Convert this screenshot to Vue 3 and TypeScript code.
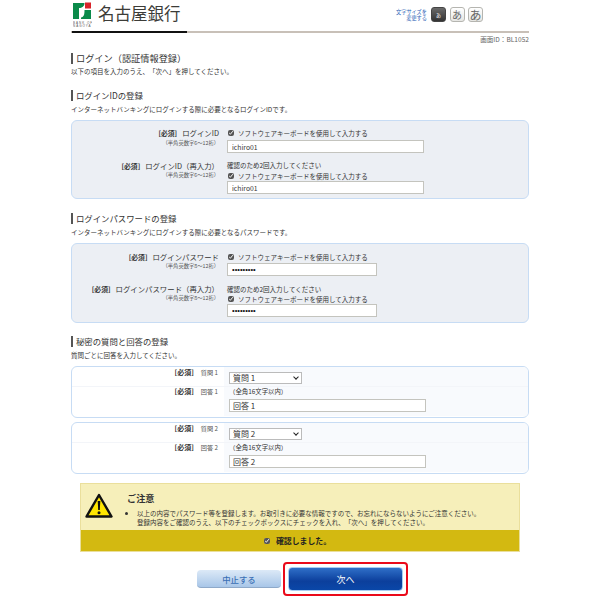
<script setup lang="ts">
interface Row { label: string; note: string; confirm: boolean; value: string }
const idNote = '\uFF08半角英数字6\uFF5E12桁\uFF09'
const pwNote = '\uFF08半角英数字8\uFF5E12桁\uFF09'
const idRows: Row[] = [
  { label: 'ログインID', note: idNote, confirm: false, value: 'ichiro01' },
  { label: 'ログインID\uFF08再入力\uFF09', note: idNote, confirm: true, value: 'ichiro01' },
]
const pwRows: Row[] = [
  { label: 'ログインパスワード', note: pwNote, confirm: false, value: 'password1' },
  { label: 'ログインパスワード\uFF08再入力\uFF09', note: pwNote, confirm: true, value: 'password1' },
]
const questions = [1, 2]
</script>

<template>
  <div class="page">
    <header class="top">
      <div class="logo-wrap">
        <svg class="logo" width="19" height="26" viewBox="0 0 19 26">
          <path d="M0 2 H11.5 C11.5 5.5 9 7 6 7 V18 H0 Z" fill="#0a8a4a" />
          <rect x="12" y="1.5" width="6" height="6" fill="#d8232a" />
          <path d="M18 9 V18 H8 V16.5 C11 16 11.5 13.5 11.5 9 Z" fill="#0a8a4a" />
          <text class="tiny" x="0" y="22.5">BANK OF</text>
          <text class="tiny" x="0" y="25.6">NAGOYA</text>
        </svg>
        <span class="bank">名古屋銀行</span>
      </div>
      <div class="sizer">
        <span class="sizer-label">文字サイズを<br />変更する</span>
        <span class="size-btn on">あ</span>
        <span class="size-btn mid">あ</span>
        <span class="size-btn big">あ</span>
      </div>
    </header>
    <div class="rule"><i></i></div>
    <div class="screen-id">画面ID&#xFF1A;BL1052</div>

    <h2 class="h first">ログイン&#xFF08;認証情報登録&#xFF09;</h2>
    <p class="sub tight">以下の項目を入力のうえ、「次へ」を押してください。</p>

    <h2 class="h second">ログインIDの登録</h2>
    <p class="sub">インターネットバンキングにログインする際に必要となるログインIDです。</p>
    <section class="box idbox">
      <div v-for="r in idRows" :key="r.label" class="row" :class="{ again: r.confirm }">
        <div class="lab">
          <div class="lab-main"><b>[必須]</b>{{ r.label }}</div>
          <div class="note">{{ r.note }}</div>
        </div>
        <div class="ctl">
          <div v-if="r.confirm" class="hint">確認のため2回入力してください</div>
          <label class="chk"><input type="checkbox" checked />ソフトウェアキーボードを使用して入力する</label>
          <input class="txt wide" type="text" :value="r.value" />
        </div>
      </div>
    </section>

    <h2 class="h third">ログインパスワードの登録</h2>
    <p class="sub">インターネットバンキングにログインする際に必要となるパスワードです。</p>
    <section class="box pw">
      <div v-for="r in pwRows" :key="r.label" class="row" :class="{ again: r.confirm }">
        <div class="lab">
          <div class="lab-main"><b>[必須]</b>{{ r.label }}</div>
          <div class="note">{{ r.note }}</div>
        </div>
        <div class="ctl">
          <div v-if="r.confirm" class="hint">確認のため2回入力してください</div>
          <label class="chk"><input type="checkbox" checked />ソフトウェアキーボードを使用して入力する</label>
          <input class="txt narrow" type="password" :value="r.value" />
        </div>
      </div>
    </section>

    <h2 class="h fourth">秘密の質問と回答の登録</h2>
    <p class="sub">質問ごとに回答を入力してください。</p>
    <section v-for="q in questions" :key="q" class="qbox">
      <div class="qrow top-row">
        <div class="qlab"><b>[必須]</b><span>質問 {{ q }}</span></div>
        <div class="qctl">
          <span class="sel-wrap"><select class="sel"><option>質問 {{ q }}</option></select></span>
        </div>
      </div>
      <div class="qrow bottom-row">
        <div class="qlab"><b>[必須]</b><span>回答 {{ q }}</span></div>
        <div class="qctl">
          <div class="qhint">&#xFF08;全角16文字以内&#xFF09;</div>
          <input class="txt answer" type="text" :value="`回答 ${q}`" />
        </div>
      </div>
    </section>

    <section class="notice">
      <div class="notice-body">
        <svg class="warn" width="28" height="25" viewBox="0 0 28 25">
          <path d="M14 2 L26.5 23.5 H1.5 Z" fill="#ffe600" stroke="#111" stroke-width="2.4" stroke-linejoin="round" />
          <path d="M12.7 8 H15.3 L14.8 17 H13.2 Z" fill="#111" />
          <circle cx="14" cy="19.8" r="1.5" fill="#111" />
        </svg>
        <div>
          <div class="notice-title">ご注意</div>
          <ul class="notice-list">
            <li>以上の内容でパスワード等を登録します。お取引きに必要な情報ですので、お忘れにならないようにご注意ください。<br />登録内容をご確認のうえ、以下のチェックボックスにチェックを入れ、「次へ」を押してください。</li>
          </ul>
        </div>
      </div>
      <label class="notice-band"><input type="checkbox" checked />確認しました。</label>
    </section>

    <div class="actions">
      <button class="btn cancel" type="button">中止する</button>
      <span class="highlight"><button class="btn next" type="button">次へ</button></span>
    </div>
  </div>
</template>

<style>
html, body { margin: 0; background: #fff; }
</style>

<style scoped>
.page {
  width: 458px;
  height: 610px;
  margin-left: 71px;
  overflow: hidden;
  font-family: "Noto Sans CJK JP", "Liberation Sans", sans-serif;
  text-spacing-trim: space-all;
  color: #333;
  box-sizing: border-box;
}
.top { height: 31px; display: flex; justify-content: space-between; align-items: flex-start; }
.logo-wrap { display: flex; align-items: flex-start; margin-left: 2px; padding-top: 1px; }
.logo { display: block; }
.tiny { font-family: "Liberation Sans", sans-serif; font-size: 3px; fill: #555; letter-spacing: 1px; }
.bank { font-size: 16.5px; line-height: 24px; margin-left: 6px; color: #3c3c38; font-weight: 400; }
.sizer { display: flex; align-items: center; margin: 7px 46px 0 0; }
.sizer-label { font-size: 5.2px; line-height: 6px; color: #2a62b5; text-align: right; margin-right: 4px; }
.size-btn {
  width: 15px; height: 15px; box-sizing: border-box; margin-right: 3.5px;
  border: 1px solid #b5b5b0; border-radius: 3px; background: linear-gradient(#fff, #e6e6e3);
  display: flex; align-items: center; justify-content: center; color: #666; line-height: 1;
}
.size-btn.on { background: linear-gradient(#6a6a6a, #333); border-color: #444; color: #fff; font-size: 5px; }
.size-btn.mid { font-size: 10px; }
.size-btn.big { font-size: 12px; margin-right: 0; }
.rule { height: 1.5px; background: #c8c0b8; }
.rule i { display: block; width: 115px; height: 100%; margin-left: 1px; background: #111; }
.screen-id { text-align: right; font-size: 6.6px; line-height: 9px; margin-top: 2px; color: #666; }

.h {
  margin: 0; padding-left: 3px; border-left: 2px solid #555;
  font-size: 8.4px; line-height: 11px; font-weight: 400; color: #333;
}
.h.first { margin-top: 9px; font-size: 9.2px; }
.h.second { margin-top: 14px; }
.h.third { margin-top: 13.5px; }
.h.fourth { margin-top: 13px; }
.sub { margin: 4px 0 0; font-size: 6.5px; line-height: 9px; color: #333; }
.sub.tight { margin-top: 3px; }

.box {
  margin-top: 6.5px; height: 79px; box-sizing: border-box; padding: 6.5px 0 0;
  background: #eceff4; border: 1.5px solid #c7dcf4; border-radius: 6px;
}
.box.pw { height: 80px; margin-top: 6px; padding-top: 8px; }
.row { display: flex; }
.row.again { margin-top: 6.5px; }
.box.pw .row.again { margin-top: 7.5px; }
.lab { width: 147px; text-align: right; flex: none; }
.lab-main { font-size: 7.4px; line-height: 11px; color: #333; white-space: nowrap; margin-top: -.5px; }
.lab-main b { font-size: 6.8px; margin-right: 5px; }
.note { font-size: 5.3px; line-height: 7px; color: #555; }
.idbox .note { margin-top: 1px; }
.idbox .row.again .lab-main { margin-top: 1.5px; line-height: 9px; }
.idbox .row.again .note { margin-top: 1.5px; line-height: 5px; }
.ctl { margin-left: 8px; flex: 1; }
.hint, .chk { font-size: 6.5px; line-height: 10px; display: block; white-space: nowrap; }
.chk { display: flex; align-items: center; height: 10px; }
.chk input { width: 6px; height: 6px; margin: 0 4px 0 1px; accent-color: #555; }
.idbox .row.again .chk { margin-top: 1px; }
.txt {
  display: block; box-sizing: border-box; height: 13px; padding: 0 4px; margin: 2.5px 0 0;
  background: #fff; border: 1px solid #c4c4be; border-radius: 0; outline: 0;
  font-family: inherit; font-size: 6.8px; color: #333;
}
.wide { width: 197px; }
.narrow { width: 150px; margin-top: 1.5px; font-family: "Liberation Sans", sans-serif; font-size: 7.5px; color: #111; }
.row.again .narrow { margin-top: .5px; }
.row.again .wide { margin-top: .5px; }

.qbox {
  margin-top: 6.5px; height: 52px; box-sizing: border-box; background: #fff;
  border: 1.5px solid #c7dcf4; border-radius: 6px; overflow: hidden;
}
.qbox + .qbox { margin-top: 4px; }
.qrow { display: flex; }
.top-row { height: 20px; border-bottom: 1px solid #f3f5f9; box-sizing: border-box; }
.bottom-row { height: 29px; }
.qlab {
  width: 152px; flex: none; display: flex; justify-content: flex-end; gap: 7px;
  box-sizing: border-box; padding: 1px 6px 0 0; font-size: 6.2px; line-height: 9px; color: #555;
}
.bottom-row .qlab { padding-top: 0; }
.qlab b { font-size: 7px; color: #333; }
.qctl { flex: 1; background: #f8fafd; padding-left: 5px; }
.sel-wrap { display: block; position: relative; width: 73px; margin-top: 4.5px; }
.sel-wrap::after {
  content: ""; position: absolute; right: 4px; top: 3.5px; width: 3px; height: 3px;
  border-right: 1.5px solid #222; border-bottom: 1.5px solid #222; transform: rotate(45deg);
}
.sel {
  appearance: none; display: block; width: 73px; height: 12px; padding: 0 0 0 3px; margin: 0;
  box-sizing: border-box; border: 1px solid #bbb; border-radius: 0; background: #fff;
  font-family: inherit; font-size: 8px; line-height: 10px; color: #333;
}
.qhint { font-size: 6.4px; line-height: 9px; }
.answer { width: 197px; margin-top: 3px; font-size: 8px; padding-left: 3px; }

.notice {
  width: 440px; margin: 9px 0 0 9px; height: 69px; box-sizing: border-box;
  background: #f6efba; border: 1px solid #eadf9c; display: flex; flex-direction: column;
}
.notice-body { flex: 1; display: flex; padding: 9px 0 0 4px; gap: 14px; }
.warn { flex: none; }
.notice-title { font-size: 9.2px; line-height: 11px; font-weight: 700; color: #333; margin-top: -.5px; }
.notice-list { margin: 5px 0 0; padding: 0 0 0 10px; font-size: 6.5px; line-height: 9px; color: #333; white-space: nowrap; }
.notice-band {
  height: 21px; flex: none; background: #d3b911; display: flex; align-items: center; justify-content: center;
  font-size: 7.9px; font-weight: 700; color: #222; padding-right: 5px;
}
.notice-band input { width: 6px; height: 6px; margin: 0 6px 0 0; accent-color: #555; }

.actions { display: flex; align-items: center; margin: 10px 0 0 126px; }
.btn { display: block; padding: 0; font-family: inherit; border-radius: 4px; }
.cancel {
  width: 84px; height: 18px; border: 0; border-bottom: 1px solid #8ea9c9; color: #3a6fb5; font-size: 8.4px; font-weight: 500;
  background: linear-gradient(#dce9f7, #a8c6e8);
}
.highlight { display: block; margin-left: 2px; padding: 3px; border: 2px solid #ea0a1a; border-radius: 4px; }
.next {
  width: 115px; height: 24px; border: 1.5px solid #a9cdf2; color: #fff; font-size: 9px; outline: 0;
  background: linear-gradient(#2f6fc8, #0c3f9c 60%, #0a47a8);
}
</style>
